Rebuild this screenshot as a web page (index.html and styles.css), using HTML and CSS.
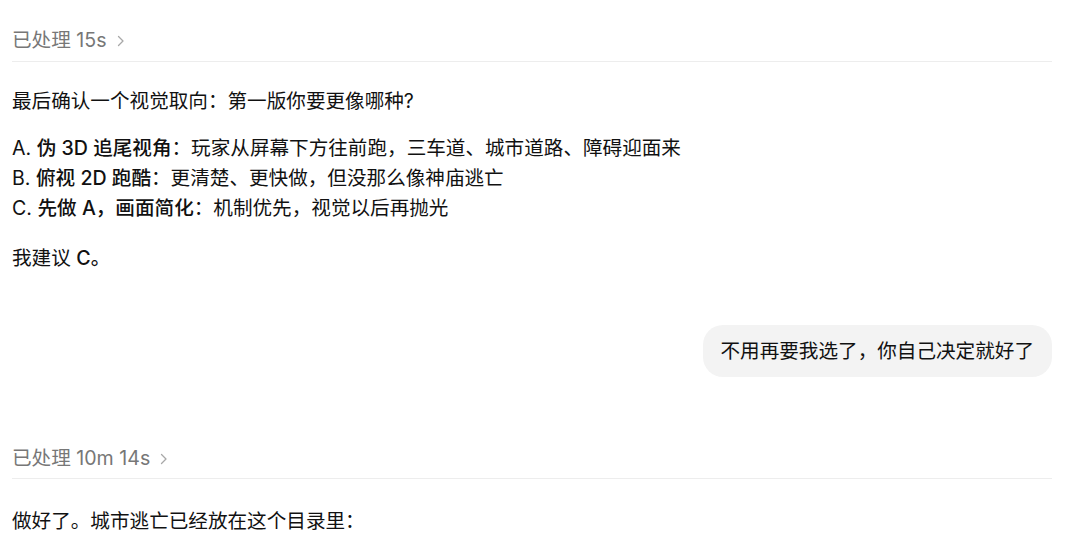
FILE: index.html
```html
<!DOCTYPE html>
<html lang="zh-CN">
<head>
    <meta charset="UTF-8">
    <meta name="viewport" content="width=device-width, initial-scale=1.0">
    <title>对话</title>
    <link rel="stylesheet" href="styles.css">
</head>
<body>
    <div class="thread">
        <div class="status status-first">
            <span>已处理 15s</span>
            <svg class="chevron" width="8" height="12" viewBox="0 0 8 12"><path d="M1.5 1.5 L6 6 L1.5 10.5" fill="none" stroke="currentColor" stroke-width="1.3" stroke-linecap="round" stroke-linejoin="round"/></svg>
        </div>

        <p class="para para-intro">最后确认一个视觉取向：第一版你要更像哪种?</p>

        <div class="options">
            <div>A. <b>伪 3D 追尾视角</b>：玩家从屏幕下方往前跑，三车道、城市道路、障碍迎面来</div>
            <div>B. <b>俯视 2D 跑酷</b>：更清楚、更快做，但没那么像神庙逃亡</div>
            <div>C. <b>先做 A，画面简化</b>：机制优先，视觉以后再抛光</div>
        </div>

        <p class="para para-pick">我建议 <b>C。</b></p>

        <div class="user-row">
            <div class="bubble">不用再要我选了，你自己决定就好了</div>
        </div>

        <div class="status status-second">
            <span>已处理 10m 14s</span>
            <svg class="chevron" width="8" height="12" viewBox="0 0 8 12"><path d="M1.5 1.5 L6 6 L1.5 10.5" fill="none" stroke="currentColor" stroke-width="1.3" stroke-linecap="round" stroke-linejoin="round"/></svg>
        </div>

        <p class="para para-done">做好了。城市逃亡已经放在这个目录里：</p>
    </div>
</body>
</html>
```

FILE: styles.css
```css
body {
    margin: 0;
    background: #ffffff;
    font-family: "Inter", "Noto Sans CJK SC", sans-serif;
    font-size: 19.6px;
    line-height: 30px;
    color: #111111;
}
.thread {
    width: 1040px;
    padding-left: 12px;
}
.status {
    display: flex;
    align-items: center;
    gap: 10px;
    color: #777777;
    border-bottom: 1px solid #ededed;
}
.status-first {
    margin-top: 25px;
    padding-bottom: 6px;
}
.status-second {
    margin-top: 66px;
    padding-bottom: 5px;
}
.chevron {
    color: #a8a8a8;
    margin-top: 1px;
}
.para {
    margin: 0;
}
.para-intro {
    margin-top: 24px;
}
.options {
    margin-top: 17px;
}
.para-pick {
    margin-top: 20px;
}
.para-done {
    margin-top: 27px;
}
b {
    font-weight: 500;
}
.user-row {
    display: flex;
    justify-content: flex-end;
    margin-top: 52px;
}
.bubble {
    background: #f3f3f3;
    border-radius: 20px;
    padding: 11px 18px;
}
```
